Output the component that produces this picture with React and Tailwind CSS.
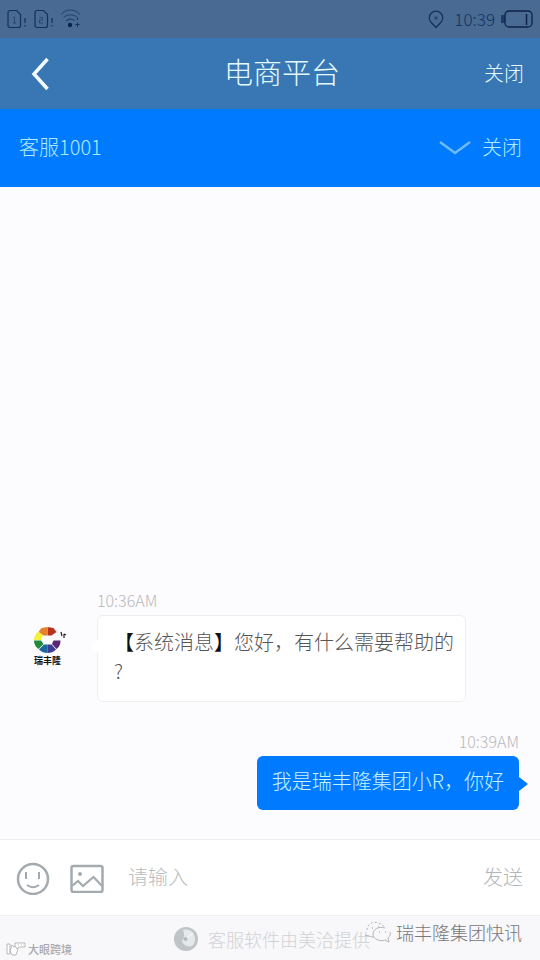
import React, { useState } from "react";

const messages = [
  { id: 1, from: "agent", time: "10:36AM", tag: "系统消息", lines: ["您好，有什么需要帮助的", "?"] },
  { id: 2, from: "me", time: "10:39AM", lines: ["我是瑞丰隆集团小R，你好"] },
];

function SimIcon({ slot }) {
  return (
    <svg width="20" height="20" viewBox="0 0 20 20" fill="none" stroke="#14305f" strokeWidth="1.2">
      <path d="M3 1.5h6.500l4 4v11a2 2 0 0 1-2 2H3a2 2 0 0 1-2-2v-13a2 2 0 0 1 2-2z" />
      {slot === 1 ? (
        <path d="M6 9l1.500-1v6M6 14h3" strokeWidth="0.6" />
      ) : (
        <path d="M5.500 8.500h3V11h-3v3h3.500" strokeWidth="0.6" />
      )}
      <path d="M18 9v5M18 16v1.500" />
    </svg>
  );
}

function StatusBar() {
  return (
    <div className="h-[38px] bg-[#496a92] text-[#14305f] flex items-center justify-between px-[7px]">
      <div className="flex items-center gap-[7px]">
        <SimIcon slot={1} />
        <SimIcon slot={2} />
        <svg width="22" height="20" viewBox="0 0 22 20" fill="none" stroke="#14305f">
          <path d="M0 5.500C5 -.5 14 -.5 19 5.500" strokeWidth="0.7" />
          <path d="M2.500 8.500c4-3.500 10-3.500 14 0" strokeWidth="0.7" />
          <path d="M5 12c2.500-2.500 6-2.500 8.500-.5" strokeWidth="1" />
          <circle cx="9" cy="16" r="2.200" fill="#0b2450" stroke="none" />
          <path d="M16.500 9v2M16.500 13.500v4.500M14.500 15.500h4" strokeWidth="1" />
        </svg>
      </div>
      <div className="flex items-center">
        <svg width="16" height="19" viewBox="0 0 16 19" fill="none" stroke="#14305f" strokeWidth="1.3">
          <path d="M8 17.500L3 12.200a6.700 6.700 0 1 1 10 0z" />
          <circle cx="8" cy="8" r="1.800" fill="#2b4874" stroke="none" />
        </svg>
        <span className="ml-[10px] text-[17px] leading-5">10:39</span>
        <svg className="ml-[6px]" width="32" height="18" viewBox="0 0 32 18" fill="none" stroke="#0e2348">
          <rect x="0" y="5" width="4" height="8" fill="#1d3a68" stroke="none" />
          <rect x="4" y="1" width="27" height="16" rx="4" strokeWidth="1.300" />
          <path d="M25.500 4v11" strokeWidth="1.500" />
        </svg>
      </div>
    </div>
  );
}

function Avatar() {
  return (
    <svg className="w-[44px] shrink-0" viewBox="0 0 44 44" role="img" aria-label="瑞丰隆">
      <g transform="translate(19.500 17)">
        <path d="M0-13L6-12 9-8 4-4.500H0z" fill="#b8321f" />
        <path d="M0-13L-6-12-9-8-4-4.500H0z" fill="#e5802c" />
        <path d="M-9.500-8.500L-4.500-4.500-6.500 0H-13.500C-13.500-3-12-6-9.500-8.500z" fill="#f5f03a" />
        <path d="M-13.500 .5H-6.500L-4 4-9 9C-12 7-13.500 4-13.500 .5z" fill="#1f8a3c" />
        <path d="M-8.500 9.500L-3.500 4.500H0V13C-3 13-6.500 12-8.500 9.500z" fill="#1f659e" />
        <path d="M0 4.500H4L8.500 9.500C6.500 12 3 13 0 13z" fill="#3b3d94" />
        <path d="M4.500 4L6 .5H13C13 4 12 7 9 9z" fill="#5a2673" />
      </g>
      <path d="M33 9l1 4M36 11v4M36 11l2 1" stroke="#222" strokeWidth="1.200" fill="none" />
      <text x="6" y="41" fontSize="9" fontWeight="700" fill="#111">瑞丰隆</text>
    </svg>
  );
}

function Message({ message }) {
  const [first, ...rest] = message.lines;

  if (message.from === "agent") {
    return (
      <div className="flex items-center pl-7">
        <Avatar />
        <div className="ml-[25px] mr-[74px] flex-1">
          <time className="block text-base leading-6 text-[#b9b9bd]">{message.time}</time>
          <div className="relative mt-[3px] rounded-md border border-[#eeeef1] bg-white pl-4 pt-[11px] pb-4 text-xl leading-[29px] text-[#555]">
            <svg className="absolute right-full top-[22px]" width="8" height="16" viewBox="0 0 8 16">
              <path d="M8 1L0 8l8 7z" fill="#fff" />
            </svg>
            <p className="flex">
              <b className="text-[#111]">【</b>
              <span>{message.tag}</span>
              <b className="text-[#111]">】</b>
              <span>{first}</span>
            </p>
            {rest.map((line) => (
              <p key={line}>{line}</p>
            ))}
          </div>
        </div>
      </div>
    );
  }

  return (
    <div className="flex flex-col items-end pr-[21px]">
      <time className="text-base leading-6 text-[#b9b9bd]">{message.time}</time>
      <div className="relative mt-[3px] rounded-md bg-[#007aff] px-[15px] pt-[10px] pb-[15px] text-xl leading-[29px] text-[#c4f2ff]">
        <p>{first}</p>
        <svg className="absolute left-full top-[20px]" width="9" height="16" viewBox="0 0 9 16">
          <path d="M0 1l9 7-9 7z" fill="#007aff" />
        </svg>
      </div>
    </div>
  );
}

export default function App() {
  const [draft, setDraft] = useState("");

  return (
    <div className="min-h-screen flex flex-col bg-[#fcfbfe] font-light font-['Noto_Sans_CJK_SC',sans-serif]">
      <StatusBar />

      {/* Page title */}
      <header className="h-[71px] bg-[#3877b3] text-[#e2faff] grid grid-cols-[1fr_auto_1fr] items-center pl-[30px] pr-4">
        <button type="button" aria-label="返回" className="w-6">
          <svg width="22" height="34" viewBox="0 0 22 34" fill="none" stroke="#f2feff" strokeWidth="3.500">
            <path d="M17.500 2L4 17l13.500 15" />
          </svg>
        </button>
        <h1 className="text-[29px] leading-9 pl-[14px] pr-1 pb-[6px]">电商平台</h1>
        <button type="button" className="justify-self-end pb-[2px] text-xl">关闭</button>
      </header>

      {/* Agent bar */}
      <div className="h-[78px] bg-[#007aff] text-[#b0eaff] flex items-center justify-between pl-[19px] pr-[18px] pb-[2px] text-xl">
        <span>客服1001</span>
        <button type="button" className="flex items-center gap-[9px]">
          <svg width="34" height="16" viewBox="0 0 34 16" fill="none" stroke="#6ebcff" strokeWidth="2.500">
            <path d="M1 3L16 14 31 3" />
          </svg>
          关闭
        </button>
      </div>

      <main className="flex-1 flex flex-col justify-end gap-[27px] pb-[29px]">
        {messages.map((m) => (
          <Message key={m.id} message={m} />
        ))}
      </main>

      {/* Composer */}
      <form
        className="h-[77px] bg-white border-y border-[#efeef2] flex items-center pl-4 pr-[17px]"
        onSubmit={(e) => e.preventDefault()}
      >
        <button type="button" aria-label="表情">
          <svg width="34" height="34" viewBox="0 0 34 34" fill="none" stroke="#a3abaf" strokeWidth="2.500">
            <circle cx="17" cy="18" r="15" />
            <path d="M10 11v7M23 11v7" strokeWidth="2" />
            <path d="M11 24c3.500 3 8.500 3 12 0" strokeWidth="2" />
          </svg>
        </button>
        <button type="button" aria-label="图片" className="ml-5">
          <svg width="34" height="30" viewBox="0 0 34 30" fill="none" stroke="#a3abaf" strokeWidth="2.500">
            <rect x="1.500" y="3" width="31" height="26" rx="2" />
            <circle cx="10" cy="11" r="2" fill="#a3abaf" stroke="none" />
            <path d="M2 23l6-5 5 5L23.500 14 32 23" strokeWidth="2.200" />
          </svg>
        </button>
        <input
          type="text"
          aria-label="请输入"
          placeholder="请输入"
          value={draft}
          onChange={(e) => setDraft(e.target.value)}
          className="ml-6 pb-[2px] min-w-0 flex-1 bg-transparent text-xl text-[#555] placeholder:text-[#b9bcbf] outline-none"
        />
        <button type="submit" className="pb-[2px] text-xl text-[#b0b5b8]">发送</button>
      </form>

      {/* Provider line with the publisher marks over it */}
      <footer className="relative h-[44px] bg-[#f8f7fa] flex items-center pl-[173px] pt-[2px]">
        <svg width="26" height="26" viewBox="0 0 26 26">
          <circle cx="13" cy="13" r="12" fill="#bfc5c7" />
          <path d="M10 4c7-2 12 3 12 9 0 3-1 5-3 7-5 1-9-1-10-5 2-3 3-6 1-11z" fill="#e6e9ea" />
          <circle cx="12.500" cy="13" r="2" fill="#b4babd" />
          <path d="M14 12l6-5" stroke="#fff" />
        </svg>
        <span className="ml-[9px] text-lg leading-6 text-[#d0d3d6] whitespace-nowrap">客服软件由美洽提供</span>

        <div className="absolute right-[18px] top-[2px] flex items-center gap-1">
          <svg width="28" height="24" viewBox="0 0 28 24" fill="none" stroke="#b5b5ba" strokeWidth="1">
            <path d="M3 10C3 4 9 1 14 3c3 1 5 2 6 4" strokeDasharray="2 2" />
            <path d="M1 15l4 1c2 1 4 1 5 1" />
            <path d="M21 8c-6-2-12 1-12 6 0 5 7 8 12 6l4 2-1-4c2-2 3-4 2-6" />
            <path d="M8 8h1M14 7h1M15 12h1M21 12h1" strokeWidth="1.500" />
          </svg>
          <span className="text-lg leading-7 text-[#77777c]">瑞丰隆集团快讯</span>
        </div>

        <div className="absolute left-[6px] bottom-[3px] flex items-center gap-[2px]">
          <svg width="20" height="16" viewBox="0 0 20 16" fill="#fff" stroke="#aaa" strokeWidth="0.800">
            <path d="M1 3h3v10H1zM6 4l2 2 3-2 1 4-2 6H6l-2-4z" />
            <path d="M9 2h10v4H13l-2 2-1-2H9z" />
            <path d="M12 4h1M15 4h1M17 4h.5" />
          </svg>
          <span className="text-[11px] leading-4 font-medium text-[#a9a9ae]">大眼跨境</span>
        </div>
      </footer>
    </div>
  );
}
